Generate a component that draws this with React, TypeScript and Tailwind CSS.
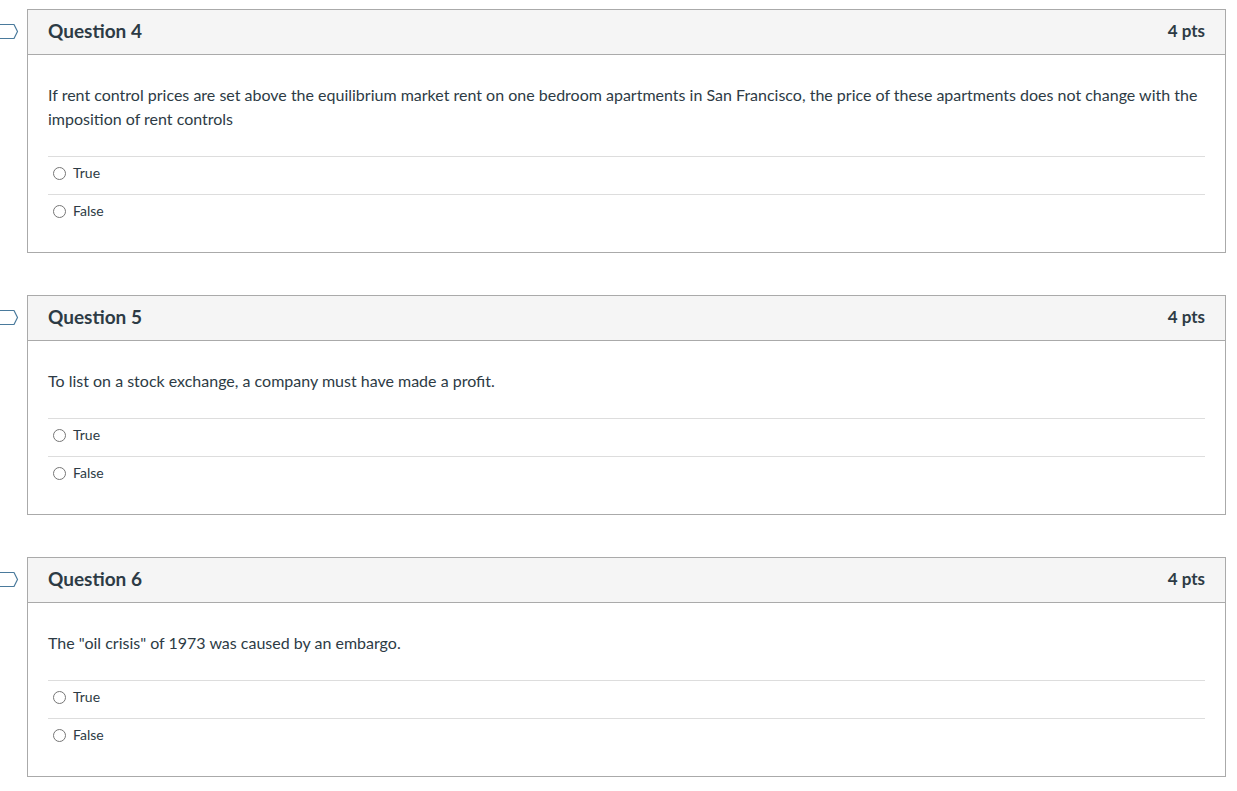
import React from "react"

type Question = { num: number; pts: number; text: string }

const questions: Question[] = [
  {
    num: 4,
    pts: 4,
    text: "If rent control prices are set above the equilibrium market rent on one bedroom apartments in San Francisco, the price of these apartments does not change with the imposition of rent controls",
  },
  { num: 5, pts: 4, text: "To list on a stock exchange, a company must have made a profit." },
  { num: 6, pts: 4, text: 'The "oil crisis" of 1973 was caused by an embargo.' },
]

function Flag() {
  return (
    <svg className="absolute left-[-28px] top-[13px]" width="20" height="17" viewBox="0 0 20 17" fill="none">
      <path d="M-2 1.5 H14 L17.5 8.5 L14 15.5 H-2" stroke="#4a7a9c" strokeWidth="1.2" strokeLinejoin="round" />
    </svg>
  )
}

function QuestionCard({ q }: { q: Question }) {
  return (
    <div className="relative border border-[#aaaaaa] bg-white">
      <Flag />
      <div className="flex h-[45px] items-center justify-between border-b border-[#aaaaaa] bg-[#f5f5f5] pb-[2px] pl-[20px] pr-[20px]">
        <span className="text-[19px] font-bold text-[#2d3b45]">Question {q.num}</span>
        <span className="text-[17px] font-bold text-[#2d3b45]">{q.pts} pts</span>
      </div>
      <div className="pl-[20px] pr-[20px] pt-[28px] pb-[20px]">
        <p className="mb-[25px] text-[16px] leading-[24px] text-[#2d3b45]">{q.text}</p>
        {["True", "False"].map((a) => (
          <label key={a} className="flex h-[38px] items-start border-t border-[#dddddd] pl-[5px] pt-[6px] text-[14px] leading-[20px] text-[#2d3b45]">
            <span className="mt-[4px] h-[13px] w-[13px] rounded-full border border-[#767676] bg-white" />
            <span className="ml-[7px]">{a}</span>
          </label>
        ))}
      </div>
    </div>
  )
}

export default function App() {
  return (
    <div className="min-h-screen bg-white pl-[27px] pr-[11px] pt-[9px] font-['Lato','Open_Sans',sans-serif]">
      <div className="flex flex-col gap-[42px]">
        {questions.map((q) => (
          <QuestionCard key={q.num} q={q} />
        ))}
      </div>
    </div>
  )
}
